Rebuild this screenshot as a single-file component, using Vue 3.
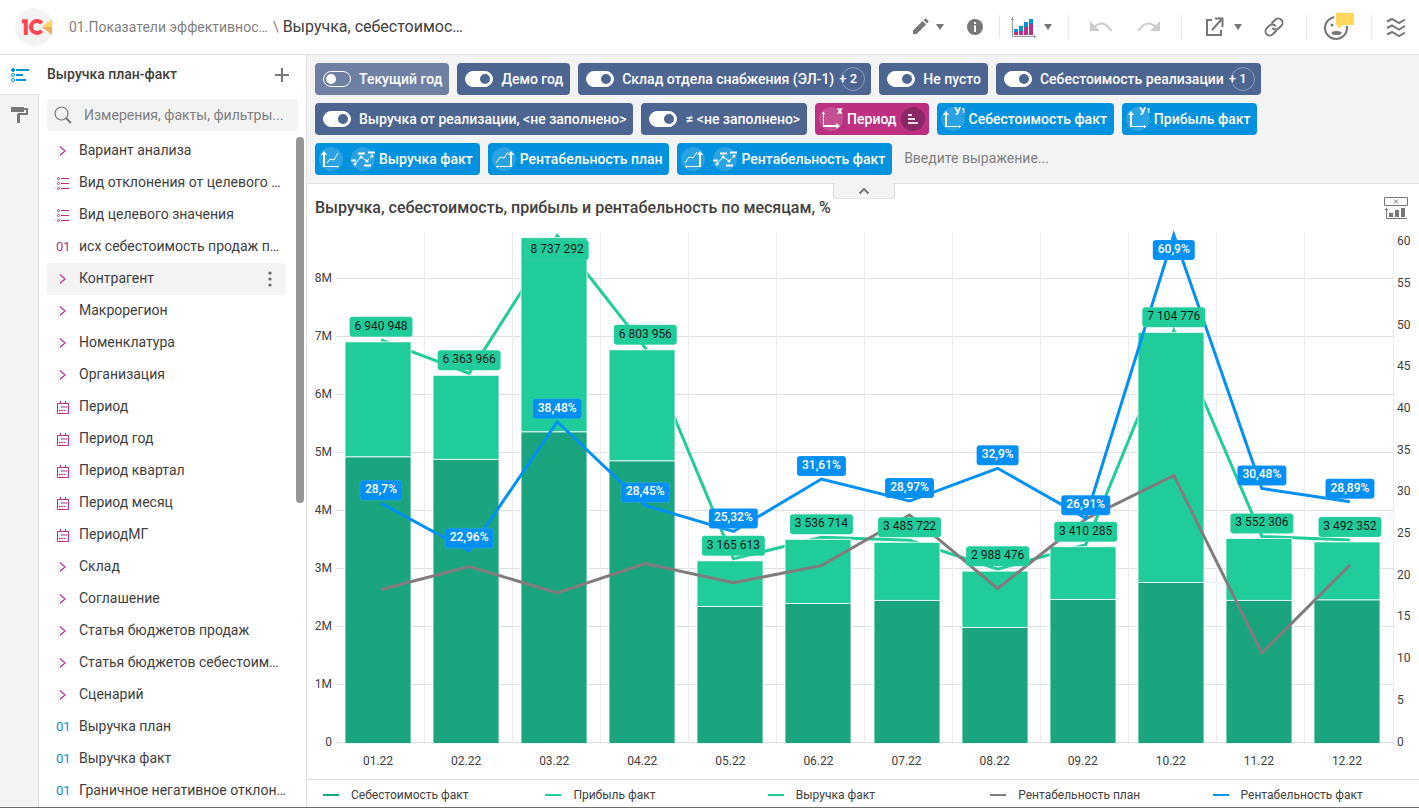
<script setup>
import { ref, computed, onMounted, onBeforeUnmount } from 'vue'

const fields = [
  { icon: 'arrow', name: 'Вариант анализа' },
  { icon: 'list', name: 'Вид отклонения от целевого …' },
  { icon: 'list', name: 'Вид целевого значения' },
  { icon: 'num', name: 'исх себестоимость продаж п…' },
  { icon: 'arrow', name: 'Контрагент', active: true },
  { icon: 'arrow', name: 'Макрорегион' },
  { icon: 'arrow', name: 'Номенклатура' },
  { icon: 'arrow', name: 'Организация' },
  { icon: 'date', name: 'Период' },
  { icon: 'date', name: 'Период год' },
  { icon: 'date', name: 'Период квартал' },
  { icon: 'date', name: 'Период месяц' },
  { icon: 'date', name: 'ПериодМГ' },
  { icon: 'arrow', name: 'Склад' },
  { icon: 'arrow', name: 'Соглашение' },
  { icon: 'arrow', name: 'Статья бюджетов продаж' },
  { icon: 'arrow', name: 'Статья бюджетов себестоим…' },
  { icon: 'arrow', name: 'Сценарий' },
  { icon: 'num', name: 'Выручка план', fact: true },
  { icon: 'num', name: 'Выручка факт', fact: true },
  { icon: 'num', name: 'Граничное негативное отклон…', fact: true },
]

const filters = ref([
  { name: 'Текущий год', on: false },
  { name: 'Демо год', on: true },
  { name: 'Склад отдела снабжения (ЭЛ-1)', on: true, more: 2 },
  { name: 'Не пусто', on: true },
  { name: 'Себестоимость реализации', on: true, more: 1 },
  { name: 'Выручка от реализации, <не заполнено>', on: true },
  { name: '≠ <не заполнено>', on: true },
])

const axes = [
  { name: 'Период', icons: ['x'], kind: 'dimension' },
  { name: 'Себестоимость факт', icons: ['y'], kind: 'measure' },
  { name: 'Прибыль факт', icons: ['y'], kind: 'measure' },
  { name: 'Выручка факт', icons: ['left', 'points'], kind: 'measure' },
  { name: 'Рентабельность план', icons: ['right'], kind: 'measure' },
  { name: 'Рентабельность факт', icons: ['right', 'points'], kind: 'measure' },
]

const legend = [
  { name: 'Себестоимость факт', tone: 'cost' },
  { name: 'Прибыль факт', tone: 'profit' },
  { name: 'Выручка факт', tone: 'profit' },
  { name: 'Рентабельность план', tone: 'plan' },
  { name: 'Рентабельность факт', tone: 'fact' },
]

const rows = [
  { m: '01.22', revenue: 6940948, cost: 4957000, fact: 28.7, plan: 18.36 },
  { m: '02.22', revenue: 6363966, cost: 4914000, fact: 22.96, plan: 21.12 },
  { m: '03.22', revenue: 8737292, cost: 5388000, fact: 38.48, plan: 17.94 },
  { m: '04.22', revenue: 6803956, cost: 4888000, fact: 28.45, plan: 21.48 },
  { m: '05.22', revenue: 3165613, cost: 2379000, fact: 25.32, plan: 19.18 },
  { m: '06.22', revenue: 3536714, cost: 2431000, fact: 31.61, plan: 21.22 },
  { m: '07.22', revenue: 3485722, cost: 2483000, fact: 28.97, plan: 27.3 },
  { m: '08.22', revenue: 2988476, cost: 2017000, fact: 32.9, plan: 18.48 },
  { m: '09.22', revenue: 3410285, cost: 2500000, fact: 26.91, plan: 26.82 },
  { m: '10.22', revenue: 7104776, cost: 2793000, fact: 60.9, plan: 32.04 },
  { m: '11.22', revenue: 3552306, cost: 2483000, fact: 30.48, plan: 10.74 },
  { m: '12.22', revenue: 3492352, cost: 2491000, fact: 28.89, plan: 21.3 },
]

const svg = ref(null)
const size = ref({ w: 1112, h: 555 })
let observer
onMounted(() => {
  const measure = () => {
    const box = svg.value.getBoundingClientRect()
    size.value = { w: Math.round(box.width), h: Math.round(box.height) }
  }
  measure()
  observer = new ResizeObserver(measure)
  observer.observe(svg.value)
})
onBeforeUnmount(() => observer && observer.disconnect())

const MAX_SUM = 8800000
const MAX_PCT = 61.25
const glyphs = { ' ': 3, ',': 2.5, '%': 9 }
const textWidth = (s) => [...s].reduce((t, c) => t + (glyphs[c] || 6.75), 0)
const group = (n) => String(n).replace(/\B(?=(\d{3})+$)/g, ' ')
const crisp = (n) => Math.floor(n) + 0.5

const chart = computed(() => {
  const { w, h } = size.value
  const left = 29
  const right = w - 26
  const top = 8
  const base = h - 36.5
  const step = (right - left) / rows.length
  const ySum = (v) => base - (v / MAX_SUM) * (base - top)
  const yPct = (v) => base - (v / MAX_PCT) * (base - top)
  const cx = (i) => left + step * (i + 0.5) + 1
  const line = (f) => rows.map((r, i) => `${cx(i)},${f(r)}`).join(' ')
  const barW = Math.round(step * 0.75)
  const label = (text, i, y) => {
    const width = Math.round(textWidth(text) + 10)
    return { text, width, x: cx(i), y: Math.max(y - 13, top + 18) }
  }
  return {
    left, right, top, base,
    cols: rows.map((r, i) => crisp(left + step * (i + 1))),
    sums: [0, 1, 2, 3, 4, 5, 6, 7, 8].map((n) => ({ text: n ? n + 'M' : '0', y: crisp(ySum(n * 1e6)) })),
    pcts: [0, 5, 10, 15, 20, 25, 30, 35, 40, 45, 50, 55, 60].map((n) => ({ text: n, y: yPct(n) })),
    bars: rows.map((r, i) => {
      const yTop = ySum(r.revenue) + 2
      const yMid = ySum(r.cost) + 2
      return { m: r.m, x: Math.round(cx(i) - 3 - barW / 2), w: barW, yTop, yMid, mid: cx(i) - 3 }
    }),
    revenue: line((r) => ySum(r.revenue)),
    plan: line((r) => yPct(r.plan)),
    fact: line((r) => yPct(r.fact)),
    sumLabels: rows.map((r, i) => label(group(r.revenue), i, ySum(r.revenue))),
    pctLabels: rows.map((r, i) => label(String(r.fact).replace('.', ',') + '%', i, yPct(r.fact))),
  }
})
</script>

<template>
  <div class="app">
    <header class="top">
      <svg class="logo" viewBox="0 0 38 38" aria-hidden="true">
        <circle cx="19" cy="19" r="19" fill="#f3f3f3" />
        <path d="M27 19 37 11v8z" fill="#ffd75a" />
        <path d="M27 19h10v8z" fill="#f0aa5c" />
        <path d="M7 13.2h3.8V27" fill="none" stroke="#ff454f" stroke-width="4" />
        <path d="M26.6 15.2a6 6 0 1 0 0 7.6" fill="none" stroke="#ff454f" stroke-width="4" />
      </svg>
      <nav class="crumbs">
        <a href="#" class="parent">01.Показатели эффективнос…</a>
        <span class="slash">\</span>
        <span class="current">Выручка, себестоимос…</span>
      </nav>
      <div class="tools">
        <div class="group edit">
          <button aria-label="Редактировать">
            <svg width="24" height="24" viewBox="0 0 24 24"><path d="M5 19v-3.600L14.600 6l3.500 3.500L8.600 19zM15.600 5l1.300-1.300q.6-.6 1.300 0l2.100 2.100q.6.6 0 1.300L19 8.400z" fill="#777" /></svg>
          </button>
          <button aria-label="Режим"><svg width="10" height="24" viewBox="0 0 10 24"><path d="M1 9h8l-4 6z" fill="#777" /></svg></button>
        </div>
        <button class="info" aria-label="Информация">
          <svg width="24" height="24" viewBox="0 0 24 24"><circle cx="12" cy="12" r="8" fill="#777" /><path d="M12 7v2M12 10.500V17" stroke="#fff" stroke-width="2" /></svg>
        </button>
        <i class="bar"></i>
        <div class="group kind">
          <button aria-label="Вид диаграммы">
            <svg width="28" height="24" viewBox="0 0 28 24">
              <path d="M2.500 2v19.500H26M1 4.500h3M24.500 20v3" fill="none" stroke="#999" />
              <path d="M4 17h4v3H4zM9 16h4v4H9zM14 12h4v8h-4zM19 9h4v11h-4z" fill="#bc2f82" />
              <path d="M4 14h4v3H4zM9 11h4v5H9zM14 7h4v5h-4zM19 4h4v5h-4z" fill="#0092de" />
            </svg>
          </button>
          <button aria-label="Выбрать диаграмму"><svg width="10" height="24" viewBox="0 0 10 24"><path d="M1 9h8l-4 6z" fill="#777" /></svg></button>
        </div>
        <i class="bar"></i>
        <div class="group history">
          <button aria-label="Отменить"><svg width="24" height="24" viewBox="0 0 24 24"><path d="M1 6v10h10z" fill="#ccc" /><path d="M5 12q10-8.500 17.500 4" fill="none" stroke="#ccc" stroke-width="2" /></svg></button>
          <button aria-label="Вернуть"><svg width="24" height="24" viewBox="0 0 24 24"><path d="M23 6v10H13z" fill="#ccc" /><path d="M19 12Q9 3.500 1.500 16" fill="none" stroke="#ccc" stroke-width="2" /></svg></button>
        </div>
        <i class="bar"></i>
        <div class="group share">
          <button aria-label="Экспорт"><svg width="24" height="24" viewBox="0 0 24 24"><path d="M9 5H4v15h14v-5M12 3.500h7.500V12M19 4 9 15" fill="none" stroke="#777" stroke-width="2" /></svg></button>
          <button aria-label="Варианты экспорта"><svg width="10" height="24" viewBox="0 0 10 24"><path d="M1 9h8l-4 6z" fill="#777" /></svg></button>
        </div>
        <button class="link" aria-label="Ссылка">
          <svg width="24" height="24" viewBox="-2 -2 28 28" fill="none" stroke="#777" stroke-width="2.300"><path d="M10 13a5 5 0 0 0 7.540.540l3-3a5 5 0 0 0-7.070-7.070l-4.500 4.500" /><path d="M14 11a5 5 0 0 0-7.540-.540l-3 3a5 5 0 0 0 7.070 7.070l4.500-4.500" /></svg>
        </button>
        <i class="bar"></i>
        <button class="face" aria-label="Обратная связь">
          <svg width="32" height="32" viewBox="0 0 32 32"><circle cx="13" cy="17" r="11" fill="none" stroke="#777" stroke-width="2" /><circle cx="9" cy="14" r="1.500" fill="#777" /><ellipse cx="13.500" cy="22" rx="5" ry="2" fill="#777" /><path d="M11 1h20v14H21l-6 4h-3z" fill="#fff" /><path d="M13 2h18v12H20l-5 4v-4h-2z" fill="#ffd75a" /></svg>
        </button>
        <i class="bar"></i>
        <button class="waves" aria-label="Меню">
          <svg width="24" height="24" viewBox="0 0 24 24" fill="none" stroke="#777" stroke-width="2"><path d="M3 6.500 8 4l7 4 6-3.500M3 13l5-2.500 7 4 6-3.500M3 19.500 8 17l7 4 6-3.500" /></svg>
        </button>
      </div>
    </header>

    <div class="body">
      <div class="rail">
        <button class="tab on" aria-label="Поля">
          <svg width="20" height="20" viewBox="0 0 20 20"><g fill="none" stroke="#0092de"><circle cx="3" cy="5" r="1.500" fill="#0092de" /><circle cx="3" cy="10" r="1.500" /><circle cx="3" cy="15" r="1.500" /><path d="M6 5h13M6 10h7M6 15h10" stroke-width="2" /></g></svg>
        </button>
        <button class="tab" aria-label="Оформление">
          <svg width="20" height="20" viewBox="0 0 20 20"><path d="M2 2h13v5H2z" fill="#777" /><path d="M15 4h3v5H9.500v9" fill="none" stroke="#777" stroke-width="2" /><path d="M8 10h3v8H8z" fill="#777" /></svg>
        </button>
      </div>

      <aside class="panel">
        <div class="head">
          <h2>Выручка план-факт</h2>
          <button aria-label="Добавить"><svg width="16" height="16" viewBox="0 0 16 16"><path d="M8 1v14M1 8h14" stroke="#777" stroke-width="2" /></svg></button>
        </div>
        <label class="search">
          <svg width="18" height="18" viewBox="0 0 18 18" fill="none" stroke="#777"><circle cx="7.500" cy="7.500" r="6.500" stroke-width="1.200" /><path d="m12 12 5 5" stroke-width="2" /></svg>
          <input type="search" placeholder="Измерения, факты, фильтры..." aria-label="Измерения, факты, фильтры" />
        </label>
        <ul class="fields">
          <li v-for="f in fields" :key="f.name" :class="{ active: f.active }">
            <button class="field">
              <svg v-if="f.icon === 'arrow'" width="14" height="14" viewBox="0 0 14 14"><path d="m4 2.500 5 4.500-5 4.500" fill="none" stroke="#c8328b" stroke-width="1.200" /></svg>
              <svg v-else-if="f.icon === 'list'" width="14" height="14" viewBox="0 0 14 14"><g fill="none" stroke="#bc2f82"><circle cx="2.500" cy="2.500" r="1" /><circle cx="2.500" cy="7.500" r="1" /><circle cx="2.500" cy="12.500" r="1" /><path d="M5 2.500h8M5 7.500h8M5 12.500h8" /></g></svg>
              <svg v-else-if="f.icon === 'date'" width="14" height="14" viewBox="0 0 14 14"><g fill="none" stroke="#bc2f82"><path d="M1.500 3.500h11v10h-11zM4.500 1v3M9.500 1v3" /><path d="M5 7h6M3 10.500h6" stroke-width="1.500" stroke-dasharray="1.500 .750" /></g></svg>
              <span v-else class="num" :class="{ fact: f.fact }">01</span>
              <span class="name">{{ f.name }}</span>
            </button>
            <button v-if="f.active" class="more" aria-label="Действия"><svg width="4" height="16" viewBox="0 0 4 16" fill="#666"><circle cx="2" cy="2" r="1.600" /><circle cx="2" cy="8" r="1.600" /><circle cx="2" cy="14" r="1.600" /></svg></button>
          </li>
        </ul>
        <div class="thumb"></div>
      </aside>

      <main class="main">
        <section class="chips">
          <label v-for="f in filters" :key="f.name" class="chip filter" :class="{ off: !f.on }">
            <input v-model="f.on" type="checkbox" role="switch" />
            <span>{{ f.name }}</span>
            <span v-if="f.more" class="count">+ {{ f.more }}</span>
          </label>
          <button v-for="a in axes" :key="a.name" class="chip axis" :class="a.kind">
            <template v-for="i in a.icons" :key="i">
              <svg class="glyph" width="32" height="32" viewBox="0 0 32 32">
                <circle cx="16" cy="16" r="12" fill="#fff" fill-opacity=".16" />
                <g v-if="i === 'x'" fill="none" stroke="#fff"><path d="M8.500 9v14" /><path d="M7 10.500h3" /><path d="M8 23h14" stroke-width="2" /><path d="m21 20 4 3-4 3z" fill="#fff" stroke="none" /><text class="mark" x="22" y="11">x</text></g>
                <g v-else-if="i === 'y'" fill="none" stroke="#fff"><path d="M9 24V10" stroke-width="2" /><path d="m6 12 3-4 3 4z" fill="#fff" stroke="none" /><path d="M9 23.500h15M22.500 22v3" /><text class="mark" x="17" y="12">У</text><text class="mark small" x="24" y="10">1</text></g>
                <g v-else-if="i === 'left'" fill="none" stroke="#fff"><path d="M9 24V10" stroke-width="2" /><path d="m6 12 3-4 3 4z" fill="#fff" stroke="none" /><path d="M9 23.500h15M22.500 22v3M12 20l3-4 4 1 4-7" /></g>
                <g v-else-if="i === 'right'" fill="none" stroke="#fff"><path d="M23 24V10" stroke-width="2" /><path d="m20 12 3-4 3 4z" fill="#fff" stroke="none" /><path d="M23 23.500H8M9.500 22v3M8 20l4-6 4 1 4-6" /></g>
                <g v-else fill="none" stroke="#fff"><path d="M4 17.500h5M11 10.500h7M17 22.500h7M21 9.500h7" stroke-width="2" /><path d="m8 21 6-7 6 4 6-6" /><g fill="#fff" stroke="none"><circle cx="8" cy="21" r="1.500" /><circle cx="14" cy="14" r="1.500" /><circle cx="20" cy="18" r="1.500" /><circle cx="25" cy="13" r="1.500" /></g></g>
              </svg>
            </template>
            <span>{{ a.name }}</span>
            <svg v-if="a.kind === 'dimension'" class="sort" width="24" height="24" viewBox="0 0 24 24"><circle cx="12" cy="12" r="12" fill="#8a2765" /><path d="M7 8h4M7 12h7M7 16h10" stroke="#fff" stroke-opacity=".85" stroke-width="2" /></svg>
          </button>
          <input class="expr" type="text" placeholder="Введите выражение..." aria-label="Выражение" />
          <button class="fold" aria-label="Свернуть"><svg width="12" height="8" viewBox="0 0 12 8"><path d="m1.500 6.500 4.500-4.500 4.500 4.500" fill="none" stroke="#777" stroke-width="2" /></svg></button>
        </section>

        <section class="view">
          <div class="title">
            <h1>Выручка, себестоимость, прибыль и рентабельность по месяцам, %</h1>
            <button aria-label="Скрыть заголовок">
              <svg width="24" height="24" viewBox="0 0 24 24" fill="none" stroke="#777"><path d="M.5 1.500h23v8H.500z" /><path d="m10 3.500 4 4m0-4-4 4" /><path d="M2.500 12v10.500H23M1 13.500h3" /><path d="M7 17v4M13 14v7M19 12v9" stroke-width="4" /></svg>
            </button>
          </div>
          <svg ref="svg" class="chart" role="img" aria-label="Выручка, себестоимость, прибыль и рентабельность по месяцам">
            <line v-for="(s, i) in chart.sums" :key="'h' + i" :x1="chart.left" :x2="chart.right" :y1="s.y" :y2="s.y" stroke="#e0e0e0" />
            <line v-for="(c, i) in chart.cols" :key="'v' + i" :x1="c" :x2="c" :y1="chart.top" :y2="chart.base" stroke="#ececec" />
            <g class="tick">
              <text v-for="(s, i) in chart.sums" :key="'l' + i" :x="chart.left - 4" :y="s.y + 3" text-anchor="end">{{ s.text }}</text>
              <text v-for="(p, i) in chart.pcts" :key="'r' + i" :x="chart.right + 4" :y="p.y + 3">{{ p.text }}</text>
              <text v-for="b in chart.bars" :key="b.m" :x="b.mid" :y="chart.base + 22" text-anchor="middle">{{ b.m }}</text>
            </g>
            <polyline class="series revenue" :points="chart.revenue" />
            <g v-for="b in chart.bars" :key="'b' + b.m" stroke="#fff" stroke-opacity=".8">
              <rect :x="b.x" :y="b.yTop" :width="b.w" :height="b.yMid - b.yTop" fill="#20cd9a" />
              <rect :x="b.x" :y="b.yMid" :width="b.w" :height="chart.base + 1 - b.yMid" fill="#1ba57f" />
            </g>
            <polyline class="series plan" :points="chart.plan" />
            <polyline class="series fact" :points="chart.fact" />
            <g v-for="(l, i) in chart.sumLabels" :key="'s' + i" class="tag">
              <rect :x="l.x - l.width / 2" :y="l.y - 10" :width="l.width" height="20" rx="3" fill="#20cd9a" />
              <text :x="l.x" :y="l.y + 3">{{ l.text }}</text>
            </g>
            <g v-for="(l, i) in chart.pctLabels" :key="'p' + i" class="tag pct">
              <rect :x="l.x - l.width / 2" :y="l.y - 10" :width="l.width" height="20" rx="3" fill="#0390f5" />
              <text :x="l.x" :y="l.y + 3">{{ l.text }}</text>
            </g>
          </svg>
          <ul class="legend">
            <li v-for="l in legend" :key="l.name"><i :class="l.tone"></i>{{ l.name }}</li>
          </ul>
        </section>
      </main>
    </div>
  </div>
</template>

<style>
body { margin: 0; }
</style>

<style scoped>
.app { display: flex; flex-direction: column; height: 100vh; box-sizing: border-box; border-bottom: 1px solid #6e6e6e; background: #fff; color: #404040; font: 14px/20px Roboto, "Liberation Sans", sans-serif; overflow: hidden; }
button { display: flex; align-items: center; flex: none; margin: 0; padding: 0; border: 0; background: none; color: inherit; font: inherit; cursor: pointer; }
svg { display: block; flex: none; }
ul { list-style: none; margin: 0; padding: 0; }
h1, h2 { margin: 0; font-weight: 500; white-space: nowrap; }
input { font: inherit; margin: 0; }

.top { display: flex; align-items: center; flex: none; height: 54px; padding: 0 11px 0 15px; border-bottom: 1px solid #e0e0e0; }
.logo { width: 38px; height: 38px; }
.crumbs { display: flex; align-items: center; margin-left: 16px; white-space: nowrap; color: #7f7f7f; }
.parent { color: #7f7f7f; text-decoration: none; }
.slash { margin: 0 4px 0 5px; }
.current { color: #404040; font-size: 16px; }
.tools { display: flex; align-items: center; margin-left: auto; }
.group { display: flex; align-items: center; }
.bar { width: 1px; height: 24px; background: #e8e8e8; }
.edit { gap: 3px; }
.info { margin: 0 12px 0 18px; }
.kind { gap: 5px; margin: 0 15px 0 10px; }
.history { gap: 24px; margin: 0 20px; }
.share { gap: 6px; margin-left: 21px; }
.link { margin: 0 20px 0 19px; }
.face { margin: 0 16px; }
.waves { margin-left: 12px; }

.body { display: flex; flex: 1; min-height: 0; }
.rail { flex: none; width: 38px; background: #f3f3f3; border-right: 1px solid #e0e0e0; }
.tab { justify-content: center; width: 38px; height: 40px; }
.tab.on { width: 39px; box-sizing: border-box; background: #fff; border-bottom: 1px solid #e0e0e0; }
.panel { position: relative; flex: none; width: 267px; box-sizing: border-box; padding-left: 8px; overflow: hidden; }
.head { display: flex; align-items: center; justify-content: space-between; height: 40px; padding-right: 16px; }
.search { display: flex; align-items: center; gap: 12px; height: 32px; margin: 4px 8px 4px 0; padding-left: 7px; border-radius: 4px; background: #f3f3f3; }
.search input { flex: 1; min-width: 0; padding: 0; border: 0; outline: 0; background: none; appearance: none; }
.search input::placeholder, .expr::placeholder { color: #7f7f7f; opacity: 1; }
.fields li { display: flex; align-items: center; height: 32px; margin-right: 20px; border-radius: 4px; }
.fields .active { background: #f3f3f3; }
.field { flex: 1; gap: 9px; height: 32px; padding-left: 9px; white-space: nowrap; }
.name { padding-bottom: 2px; }
h2 { padding-bottom: 2px; }
.num { width: 14px; color: #bc2f82; font-size: 13px; text-align: center; }
.num.fact { color: #0092de; }
.more { padding-right: 14px; }
.thumb { position: absolute; top: 82px; right: 2px; width: 8px; height: 366px; border-radius: 4px; background: #959595; }

.main { display: flex; flex: 1; flex-direction: column; min-width: 0; border-left: 1px solid #e0e0e0; }
.chips { position: relative; display: flex; flex-wrap: wrap; gap: 8px; padding: 8px 128px 8px 8px; border-bottom: 1px solid #e0e0e0; background: #f3f3f3; }
.chip { display: flex; align-items: center; box-sizing: border-box; height: 32px; padding-right: 7px; border-radius: 4px; color: #fff; font-weight: 500; white-space: nowrap; }
.filter { gap: 8px; padding-left: 8px; background: #4c6591; }
.filter.off { background: #7080a4; }
.filter input { display: flex; align-items: center; justify-content: flex-end; box-sizing: border-box; width: 28px; height: 16px; padding: 0 2px; border: 1px solid #fff; border-radius: 8px; background: #fff; appearance: none; }
.filter input::after { content: ""; width: 10px; height: 10px; border-radius: 5px; background: #4c6591; }
.filter.off input { justify-content: flex-start; background: none; }
.filter.off input::after { background: #fff; }
.count { position: relative; width: 24px; margin: 0 -1px 0 -3px; padding-right: 2px; font-size: 13px; }
.count::after { content: ""; position: absolute; top: -2px; right: 0; box-sizing: border-box; width: 24px; height: 24px; border: 1px solid rgba(255, 255, 255, .35); border-radius: 12px; }
.measure { background: #0092de; }
.dimension { padding-right: 4px; background: #bc2f82; }
.sort { margin-left: 4px; }
.mark { fill: #fff; stroke: none; font-size: 11px; font-weight: 700; }
.mark.small { font-size: 8px; }
.expr { flex: 1 0 160px; min-width: 0; height: 32px; box-sizing: border-box; padding: 0 4px 2px; border: 0; outline: 0; background: none; }
.fold { position: absolute; top: 100%; left: 50%; justify-content: center; box-sizing: border-box; width: 62px; height: 16px; margin-left: -30px; border: 1px solid #e0e0e0; border-top: 0; border-radius: 0 0 4px 4px; background: #f3f3f3; }

.view { display: flex; flex: 1; flex-direction: column; min-height: 0; }
.title { display: flex; align-items: center; justify-content: space-between; flex: none; height: 40px; box-sizing: border-box; padding: 8px 11px 0 8px; }
h1 { font-size: 16px; line-height: 32px; }
h2 { font-size: 14px; }
.chart { flex: 1 1 0; width: 100%; min-height: 0; }
.tick text { fill: #404040; font-size: 12px; }
.series { fill: none; stroke-width: 3; }
.revenue { stroke: #20cd9a; }
.series.plan { stroke: #827b7c; }
.series.fact { stroke: #0390f5; }
.tag rect { stroke: #fff; stroke-opacity: .1; }
.tag text { fill: #1a1a1a; font-size: 12px; text-anchor: middle; }
.tag.pct text { fill: #fff; font-weight: 500; }
.legend { display: grid; grid-template-columns: repeat(5, 1fr); flex: none; height: 27px; border-top: 1px solid #e0e0e0; font-size: 12px; }
.legend li { display: flex; align-items: center; gap: 12px; padding: 3px 0 0 16px; white-space: nowrap; }
.legend i { width: 16px; height: 2px; }
.legend .cost { background: #1ba57f; }
.legend .profit { background: #20cd9a; }
.legend .plan { background: #827b7c; }
.legend .fact { background: #0390f5; }
</style>
